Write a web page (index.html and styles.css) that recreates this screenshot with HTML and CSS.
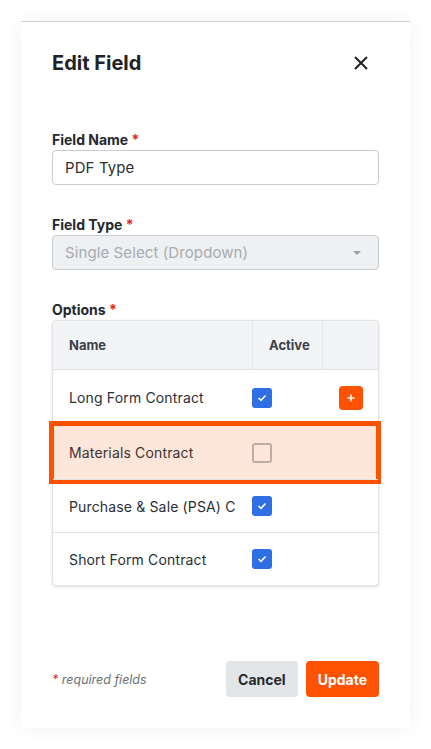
FILE: index.html
```html
<!DOCTYPE html>
<html>
<head>
<meta charset="utf-8">
<link rel="stylesheet" href="styles.css">
</head>
<body>
<div class="card">
  <div class="head">
    <h1 class="title">Edit Field</h1>
    <svg class="close" width="16" height="16" viewBox="0 0 16 16"><path d="M2 2L14 14M14 2L2 14" stroke="#222" stroke-width="2" fill="none"/></svg>
  </div>

  <div class="field first">
    <div class="label">Field Name <span class="req">*</span></div>
    <div class="input">PDF Type</div>
  </div>

  <div class="field">
    <div class="label">Field Type <span class="req">*</span></div>
    <div class="input select"><span>Single Select (Dropdown)</span><span class="caret"></span></div>
  </div>

  <div class="field">
    <div class="label">Options <span class="req">*</span></div>
    <div class="table">
      <div class="row hrow">
        <div class="c name">Name</div>
        <div class="c act">Active</div>
        <div class="c add"></div>
      </div>
      <div class="row r1">
        <div class="c name"><span class="txt">Long Form Contract</span></div>
        <div class="c act"><span class="cb on"><svg width="10" height="8" viewBox="0 0 10 8"><path d="M1.5 4L4 6.3L8.5 1.5" stroke="#fff" stroke-width="1.6" fill="none"/></svg></span></div>
        <div class="c add"><span class="plus"><svg width="10" height="10" viewBox="0 0 10 10"><path d="M5 1.5V8.5M1.5 5H8.5" stroke="#fff" stroke-width="1.5"/></svg></span></div>
      </div>
      <div class="row r2 hl">
        <div class="c name"><span class="txt">Materials Contract</span></div>
        <div class="c act"><span class="cb off"></span></div>
        <div class="c add"></div>
        <div class="hlbox"></div>
      </div>
      <div class="row r3">
        <div class="c name"><span class="txt">Purchase &amp; Sale (PSA) C</span></div>
        <div class="c act"><span class="cb on"><svg width="10" height="8" viewBox="0 0 10 8"><path d="M1.5 4L4 6.3L8.5 1.5" stroke="#fff" stroke-width="1.6" fill="none"/></svg></span></div>
        <div class="c add"></div>
      </div>
      <div class="row r4">
        <div class="c name"><span class="txt">Short Form Contract</span></div>
        <div class="c act"><span class="cb on"><svg width="10" height="8" viewBox="0 0 10 8"><path d="M1.5 4L4 6.3L8.5 1.5" stroke="#fff" stroke-width="1.6" fill="none"/></svg></span></div>
        <div class="c add"></div>
      </div>
    </div>
  </div>

  <div class="foot">
    <div class="note"><span class="req">*</span> required fields</div>
    <div class="btns">
      <button class="btn cancel">Cancel</button>
      <button class="btn update">Update</button>
    </div>
  </div>
</div>
</body>
</html>
```

FILE: styles.css
```css
* { box-sizing: border-box; }
html, body { margin: 0; padding: 0; background: #fff; }
body {
  font-family: Inter, "Noto Sans", sans-serif;
  color: #24292f;
  padding: 21px;
}
.card {
  width: 389px;
  height: 707px;
  background: #fff;
  border-top: 1px solid #cfd1d3;
  box-shadow: 0 0 18px rgba(0, 0, 0, 0.06);
  padding: 28px 31px 31px;
  display: flex;
  flex-direction: column;
}
.head {
  display: flex;
  align-items: center;
  justify-content: space-between;
  height: 26px;
}
.title {
  margin: 0;
  font-size: 20px;
  font-weight: 700;
  color: #1f2328;
  line-height: 26px;
}
.close { margin-right: 10px; }
.field { margin-top: 30px; }
.field.first { margin-top: 54px; }
.label {
  font-size: 14px;
  font-weight: 700;
  line-height: 20px;
  color: #24292f;
}
.req { color: #e5252a; }
.input {
  height: 35px;
  border: 1px solid #c8ccd1;
  border-radius: 4px;
  padding: 0 12px;
  display: flex;
  align-items: center;
  font-size: 15px;
  color: #2b3036;
  letter-spacing: 0.1px;
}
.select {
  background: #eef0f2;
  color: #a6acb2;
  justify-content: space-between;
}
.caret {
  width: 0; height: 0;
  border-left: 4px solid transparent;
  border-right: 4px solid transparent;
  border-top: 4px solid #9aa0a6;
  margin-right: 5px;
}
.table {
  border: 1px solid #e1e3e6;
  border-radius: 4px;
  box-shadow: 0 1px 3px rgba(0,0,0,0.14);
  background: #fff;
}
.row {
  display: flex;
  position: relative;
  border-top: 1px solid #e1e3e6;
}
.hrow {
  border-top: none;
  background: #f3f4f6;
  height: 49px;
  border-radius: 4px 4px 0 0;
  border-bottom: 1px solid #dcdfe2;
}
.hrow + .row { border-top: none; }
.r1 { height: 55px; }
.r2 { height: 54px; }
.r3, .r4 { height: 53px; }
.c {
  display: flex;
  align-items: center;
  font-size: 14px;
  color: #2a2f35;
  letter-spacing: 0.15px;
}
.name {
  width: 199px;
  padding: 0 16px;
}
.txt {
  display: block;
  max-width: 100%;
  overflow: hidden;
  white-space: nowrap;
}
.act { width: 71px; }
.add { flex: 1; padding-left: 16px; }
.hrow .c { font-size: 13px; font-weight: 700; color: #3b4148; letter-spacing: 0; }
.hrow .act { border-left: 1px solid #e6e8ea; border-right: 1px solid #e6e8ea; padding-left: 16px; }
.hrow .add { padding-left: 0; }
.cb {
  width: 20px; height: 20px;
  border-radius: 3px;
  display: flex; align-items: center; justify-content: center;
}
.cb.on { background: #2f6ee3; }
.cb.off { border: 2px solid #bcaea7; }
.plus {
  width: 24px; height: 24px;
  border-radius: 4px;
  background: #ff5200;
  display: flex; align-items: center; justify-content: center;
}
.hl { background: #ffe6da; }
.hl .c { color: #3d3431; }
.hlbox {
  position: absolute;
  left: -4px; right: -3px; top: -5px; bottom: -5px;
  border: 5px solid #ff5200;
  pointer-events: none;
}
.foot {
  margin-top: auto;
  display: flex;
  align-items: center;
  justify-content: space-between;
}
.note {
  font-size: 12.5px;
  font-style: italic;
  color: #6b7178;
}
.btns { display: flex; gap: 8px; }
.btn {
  height: 36px;
  border: none;
  border-radius: 4px;
  font-family: Inter, "Noto Sans", sans-serif;
  font-size: 14px;
  font-weight: 700;
  padding: 0 12px;
}
.cancel { background: #e3e6e9; color: #24292f; }
.update { background: #ff5200; color: #fff; }
```
